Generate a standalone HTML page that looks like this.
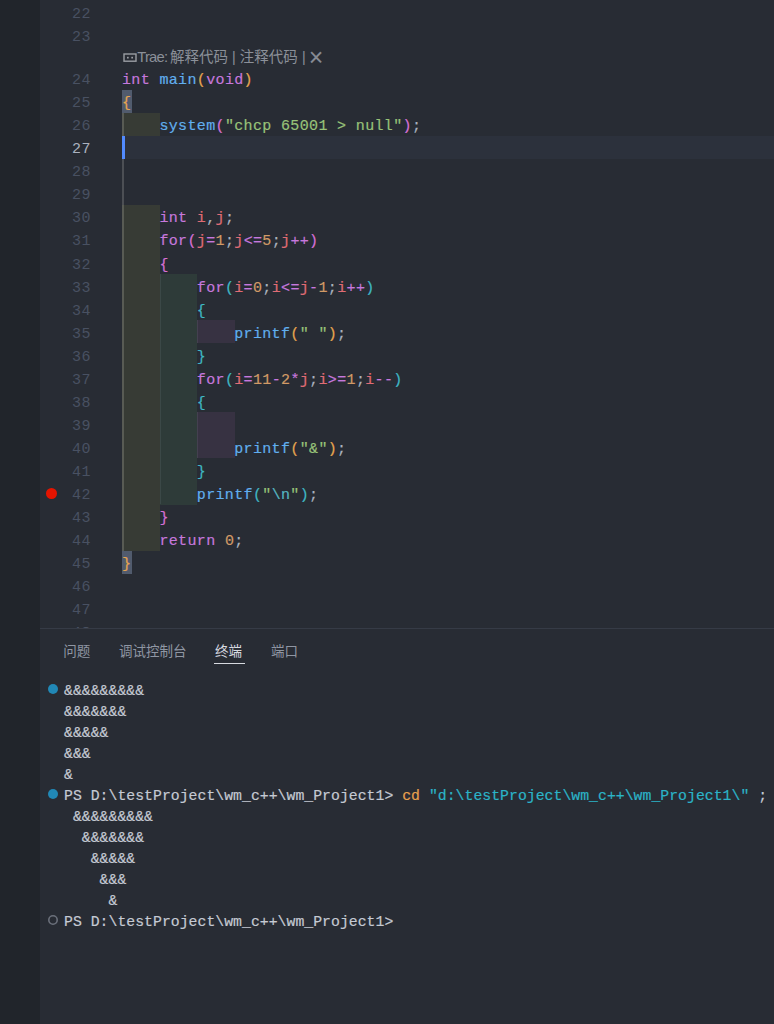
<!DOCTYPE html>
<html lang="zh-CN">
<head>
<meta charset="utf-8">
<title>editor</title>
<style>
html,body{margin:0;padding:0;}
body{width:774px;height:1024px;overflow:hidden;background:#282c34;position:relative;font-family:"Liberation Sans","Noto Sans CJK SC",sans-serif;}
#side{position:absolute;left:0;top:0;width:40px;height:1024px;background:#21252b;}
#editor{position:absolute;left:40px;top:0;width:734px;height:628px;overflow:hidden;background:#282c34;}
.ln{position:absolute;left:0;width:50.8px;text-align:right;height:23px;line-height:23px;color:#495162;font-family:"Liberation Mono",monospace;font-size:15px;letter-spacing:0.35px;}
.ln.act{color:#abb2bf;}
.cl{-webkit-text-stroke:0.18px;position:absolute;left:82px;height:23px;line-height:23px;white-space:pre;color:#abb2bf;font-family:"Liberation Mono",monospace;font-size:15px;letter-spacing:0.35px;}
.ib{position:absolute;}
.k{color:#c678dd}.f{color:#61afef}.v{color:#e06c75}.n{color:#d19a66}.s{color:#98c379}.p{color:#abb2bf}
.b1{color:#e5a550}.b2{color:#d670d6}.b3{color:#3fb7c4}.e{color:#56b6c2}.o{color:#c678dd}
.bmb{position:absolute;left:82px;width:10px;height:23px;background:#515b6d;}
#curline{position:absolute;left:82px;top:136px;width:652px;height:23px;background:#2c313c;}
#cursor{position:absolute;left:82px;top:136px;width:3px;height:23px;background:#528bff;}
#guide{position:absolute;left:82px;top:113px;width:1.5px;height:437.6px;background:rgba(200,200,190,0.23);}
.g2{position:absolute;width:1px;background:rgba(200,210,220,0.09);}
#bp{position:absolute;left:6px;top:487.8px;width:11px;height:11px;border-radius:50%;background:#e51400;}
#lens{position:absolute;left:82px;top:47px;height:20px;width:300px;}
.lt{position:absolute;top:0;height:20px;line-height:20px;font-size:14.3px;color:#8b9099;white-space:pre;}
.lx{font-family:"Liberation Sans",sans-serif;font-size:25px;color:#868a93;}
#panel{position:absolute;left:40px;top:628px;width:734px;height:396px;background:#282c34;border-top:1px solid #363b46;box-sizing:border-box;}
.tab{position:absolute;top:13px;height:20px;line-height:20px;font-size:13.5px;color:#8f96a3;white-space:pre;}
.tab.on{color:#d7dae0;}
#ul{position:absolute;left:173.6px;top:34px;width:31px;height:1px;background:#d7dae0;}
.tl{-webkit-text-stroke:0.18px;position:absolute;left:24px;height:21px;line-height:21px;white-space:pre;color:#c5cad3;font-family:"Liberation Mono",monospace;font-size:14.8px;letter-spacing:0.02px;}
.dot{position:absolute;left:8px;width:10px;height:10px;border-radius:50%;background:#2188b6;}
.ring{position:absolute;left:8px;width:7px;height:7px;border-radius:50%;border:1.5px solid #747a85;}
.ty{color:#e8a04e}.tc{color:#2bb4c8}
</style>
</head>
<body>
<div id="side"></div>
<div id="editor">
<div id="curline"></div>

<div class="ib" style="left:82.00px;top:112.97px;width:37.6px;height:23.055px;background:#373b35"></div>
<div class="ib" style="left:82.00px;top:205.11px;width:37.6px;height:23.055px;background:#373b35"></div>
<div class="ib" style="left:82.00px;top:228.14px;width:37.6px;height:23.055px;background:#373b35"></div>
<div class="ib" style="left:82.00px;top:251.18px;width:37.6px;height:23.055px;background:#373b35"></div>
<div class="ib" style="left:82.00px;top:274.21px;width:37.6px;height:23.055px;background:#373b35"></div>
<div class="ib" style="left:119.60px;top:274.21px;width:37.6px;height:23.055px;background:#2e3b39"></div>
<div class="ib" style="left:82.00px;top:297.25px;width:37.6px;height:23.055px;background:#373b35"></div>
<div class="ib" style="left:119.60px;top:297.25px;width:37.6px;height:23.055px;background:#2e3b39"></div>
<div class="ib" style="left:82.00px;top:320.28px;width:37.6px;height:23.055px;background:#373b35"></div>
<div class="ib" style="left:119.60px;top:320.28px;width:37.6px;height:23.055px;background:#2e3b39"></div>
<div class="ib" style="left:157.20px;top:320.28px;width:37.6px;height:23.055px;background:#373242"></div>
<div class="ib" style="left:82.00px;top:343.31px;width:37.6px;height:23.055px;background:#373b35"></div>
<div class="ib" style="left:119.60px;top:343.31px;width:37.6px;height:23.055px;background:#2e3b39"></div>
<div class="ib" style="left:82.00px;top:366.35px;width:37.6px;height:23.055px;background:#373b35"></div>
<div class="ib" style="left:119.60px;top:366.35px;width:37.6px;height:23.055px;background:#2e3b39"></div>
<div class="ib" style="left:82.00px;top:389.38px;width:37.6px;height:23.055px;background:#373b35"></div>
<div class="ib" style="left:119.60px;top:389.38px;width:37.6px;height:23.055px;background:#2e3b39"></div>
<div class="ib" style="left:82.00px;top:435.45px;width:37.6px;height:23.055px;background:#373b35"></div>
<div class="ib" style="left:119.60px;top:435.45px;width:37.6px;height:23.055px;background:#2e3b39"></div>
<div class="ib" style="left:157.20px;top:435.45px;width:37.6px;height:23.055px;background:#373242"></div>
<div class="ib" style="left:82.00px;top:458.49px;width:37.6px;height:23.055px;background:#373b35"></div>
<div class="ib" style="left:119.60px;top:458.49px;width:37.6px;height:23.055px;background:#2e3b39"></div>
<div class="ib" style="left:82.00px;top:481.52px;width:37.6px;height:23.055px;background:#373b35"></div>
<div class="ib" style="left:119.60px;top:481.52px;width:37.6px;height:23.055px;background:#2e3b39"></div>
<div class="ib" style="left:82.00px;top:504.56px;width:37.6px;height:23.055px;background:#373b35"></div>
<div class="ib" style="left:82.00px;top:527.6px;width:37.6px;height:23.055px;background:#373b35"></div>
<div class="ib" style="left:82.00px;top:412.42px;width:37.6px;height:23.055px;background:#373b35"></div>
<div class="ib" style="left:119.60px;top:412.42px;width:37.6px;height:23.055px;background:#2e3b39"></div>
<div class="ib" style="left:157.20px;top:412.42px;width:37.6px;height:23.055px;background:#373242"></div>
<div id="guide"></div>
<div class="bmb" style="top:89.93px"></div><div class="bmb" style="top:550.63px"></div>
<div class="g2" style="left:119.6px;top:274.21px;height:230px"></div>
<div class="g2" style="left:157.2px;top:320.28px;height:23px"></div>
<div class="g2" style="left:157.2px;top:412.42px;height:46px"></div>
<div id="cursor"></div>
<div class="ln" style="top:3.17px">22</div>
<div class="ln" style="top:26.21px">23</div>
<div class="ln" style="top:69.24px">24</div>
<div class="cl" style="top:69.24px"><span class="k">int</span><span class="p"> </span><span class="f">main</span><span class="b1">(</span><span class="k">void</span><span class="b1">)</span></div>
<div class="ln" style="top:92.28px">25</div>
<div class="cl" style="top:92.28px"><span class="b1">{</span></div>
<div class="ln" style="top:115.32px">26</div>
<div class="cl" style="top:115.32px">    <span class="f">system</span><span class="b2">(</span><span class="s">"chcp 65001 &gt; null"</span><span class="b2">)</span><span class="p">;</span></div>
<div class="ln act" style="top:138.35px">27</div>
<div class="ln" style="top:161.38px">28</div>
<div class="ln" style="top:184.42px">29</div>
<div class="ln" style="top:207.46px">30</div>
<div class="cl" style="top:207.46px">    <span class="k">int</span><span class="p"> </span><span class="v">i</span><span class="p">,</span><span class="v">j</span><span class="p">;</span></div>
<div class="ln" style="top:230.48999999999998px">31</div>
<div class="cl" style="top:230.48999999999998px">    <span class="k">for</span><span class="b2">(</span><span class="v">j</span><span class="o">=</span><span class="n">1</span><span class="p">;</span><span class="v">j</span><span class="o">&lt;=</span><span class="n">5</span><span class="p">;</span><span class="v">j</span><span class="o">++</span><span class="b2">)</span></div>
<div class="ln" style="top:253.53px">32</div>
<div class="cl" style="top:253.53px">    <span class="b2">{</span></div>
<div class="ln" style="top:276.56px">33</div>
<div class="cl" style="top:276.56px">        <span class="k">for</span><span class="b3">(</span><span class="v">i</span><span class="o">=</span><span class="n">0</span><span class="p">;</span><span class="v">i</span><span class="o">&lt;=</span><span class="v">j</span><span class="o">-</span><span class="n">1</span><span class="p">;</span><span class="v">i</span><span class="o">++</span><span class="b3">)</span></div>
<div class="ln" style="top:299.6px">34</div>
<div class="cl" style="top:299.6px">        <span class="b3">{</span></div>
<div class="ln" style="top:322.63px">35</div>
<div class="cl" style="top:322.63px">            <span class="f">printf</span><span class="b1">(</span><span class="s">" "</span><span class="b1">)</span><span class="p">;</span></div>
<div class="ln" style="top:345.66px">36</div>
<div class="cl" style="top:345.66px">        <span class="b3">}</span></div>
<div class="ln" style="top:368.70000000000005px">37</div>
<div class="cl" style="top:368.70000000000005px">        <span class="k">for</span><span class="b3">(</span><span class="v">i</span><span class="o">=</span><span class="n">11</span><span class="o">-</span><span class="n">2</span><span class="o">*</span><span class="v">j</span><span class="p">;</span><span class="v">i</span><span class="o">&gt;=</span><span class="n">1</span><span class="p">;</span><span class="v">i</span><span class="o">--</span><span class="b3">)</span></div>
<div class="ln" style="top:391.73px">38</div>
<div class="cl" style="top:391.73px">        <span class="b3">{</span></div>
<div class="ln" style="top:414.77000000000004px">39</div>
<div class="ln" style="top:437.8px">40</div>
<div class="cl" style="top:437.8px">            <span class="f">printf</span><span class="b1">(</span><span class="s">"&amp;"</span><span class="b1">)</span><span class="p">;</span></div>
<div class="ln" style="top:460.84000000000003px">41</div>
<div class="cl" style="top:460.84000000000003px">        <span class="b3">}</span></div>
<div class="ln" style="top:483.87px">42</div>
<div class="cl" style="top:483.87px">        <span class="f">printf</span><span class="b3">(</span><span class="s">"</span><span class="e">\n</span><span class="s">"</span><span class="b3">)</span><span class="p">;</span></div>
<div class="ln" style="top:506.91px">43</div>
<div class="cl" style="top:506.91px">    <span class="b2">}</span></div>
<div class="ln" style="top:529.95px">44</div>
<div class="cl" style="top:529.95px">    <span class="k">return</span><span class="p"> </span><span class="n">0</span><span class="p">;</span></div>
<div class="ln" style="top:552.98px">45</div>
<div class="cl" style="top:552.98px"><span class="b1">}</span></div>
<div class="ln" style="top:576.01px">46</div>
<div class="ln" style="top:599.0500000000001px">47</div>
<div class="ln" style="top:622.09px">48</div>
<div id="bp"></div>
<div id="lens"><svg style="position:absolute;left:1px;top:5.5px" width="14" height="10" viewBox="0 0 14 10"><rect x="1" y="1" width="12" height="7.2" fill="none" stroke="#9a9da3" stroke-width="1.4"/><rect x="4" y="3.8" width="1.7" height="1.7" fill="#9a9da3"/><rect x="8.3" y="3.8" width="1.7" height="1.7" fill="#9a9da3"/></svg><span class="lt" style="left:15.2px;font-size:14.8px;letter-spacing:-0.78px">Trae:</span><span class="lt" style="left:48.1px;font-size:14.5px">解释代码</span><span class="lt" style="left:110px">|</span><span class="lt" style="left:117.8px;font-size:14.5px">注释代码</span><span class="lt" style="left:180px">|</span><span class="lt lx" style="left:186.7px;top:0px">×</span></div>
</div>
<div id="panel">
<div class="tab" style="left:23.2px">问题</div>
<div class="tab" style="left:79px">调试控制台</div>
<div class="tab on" style="left:175px">终端</div>
<div class="tab" style="left:231px">端口</div>
<div id="ul"></div>
<div class="tl" style="top:51.9px">&amp;&amp;&amp;&amp;&amp;&amp;&amp;&amp;&amp;</div>
<div class="tl" style="top:72.9px">&amp;&amp;&amp;&amp;&amp;&amp;&amp;</div>
<div class="tl" style="top:93.9px">&amp;&amp;&amp;&amp;&amp;</div>
<div class="tl" style="top:114.9px">&amp;&amp;&amp;</div>
<div class="tl" style="top:135.9px">&amp;</div>
<div class="tl" style="top:156.9px">PS D:\testProject\wm_c++\wm_Project1&gt; <span class="ty">cd</span> <span class="tc">"d:\testProject\wm_c++\wm_Project1\"</span> ;</div>
<div class="tl" style="top:177.9px"> &amp;&amp;&amp;&amp;&amp;&amp;&amp;&amp;&amp;</div>
<div class="tl" style="top:198.9px">  &amp;&amp;&amp;&amp;&amp;&amp;&amp;</div>
<div class="tl" style="top:219.9px">   &amp;&amp;&amp;&amp;&amp;</div>
<div class="tl" style="top:240.9px">    &amp;&amp;&amp;</div>
<div class="tl" style="top:261.9px">     &amp;</div>
<div class="tl" style="top:282.9px">PS D:\testProject\wm_c++\wm_Project1&gt;</div>
<div class="dot" style="top:55px"></div>
<div class="dot" style="top:160px"></div>
<svg style="position:absolute;left:6.899999999999999px;top:285.20000000000005px" width="12" height="12" viewBox="0 0 12 12"><circle cx="6" cy="6" r="4.2" fill="none" stroke="#6b707b" stroke-width="1.6"/></svg>
</div>
</body>
</html>
